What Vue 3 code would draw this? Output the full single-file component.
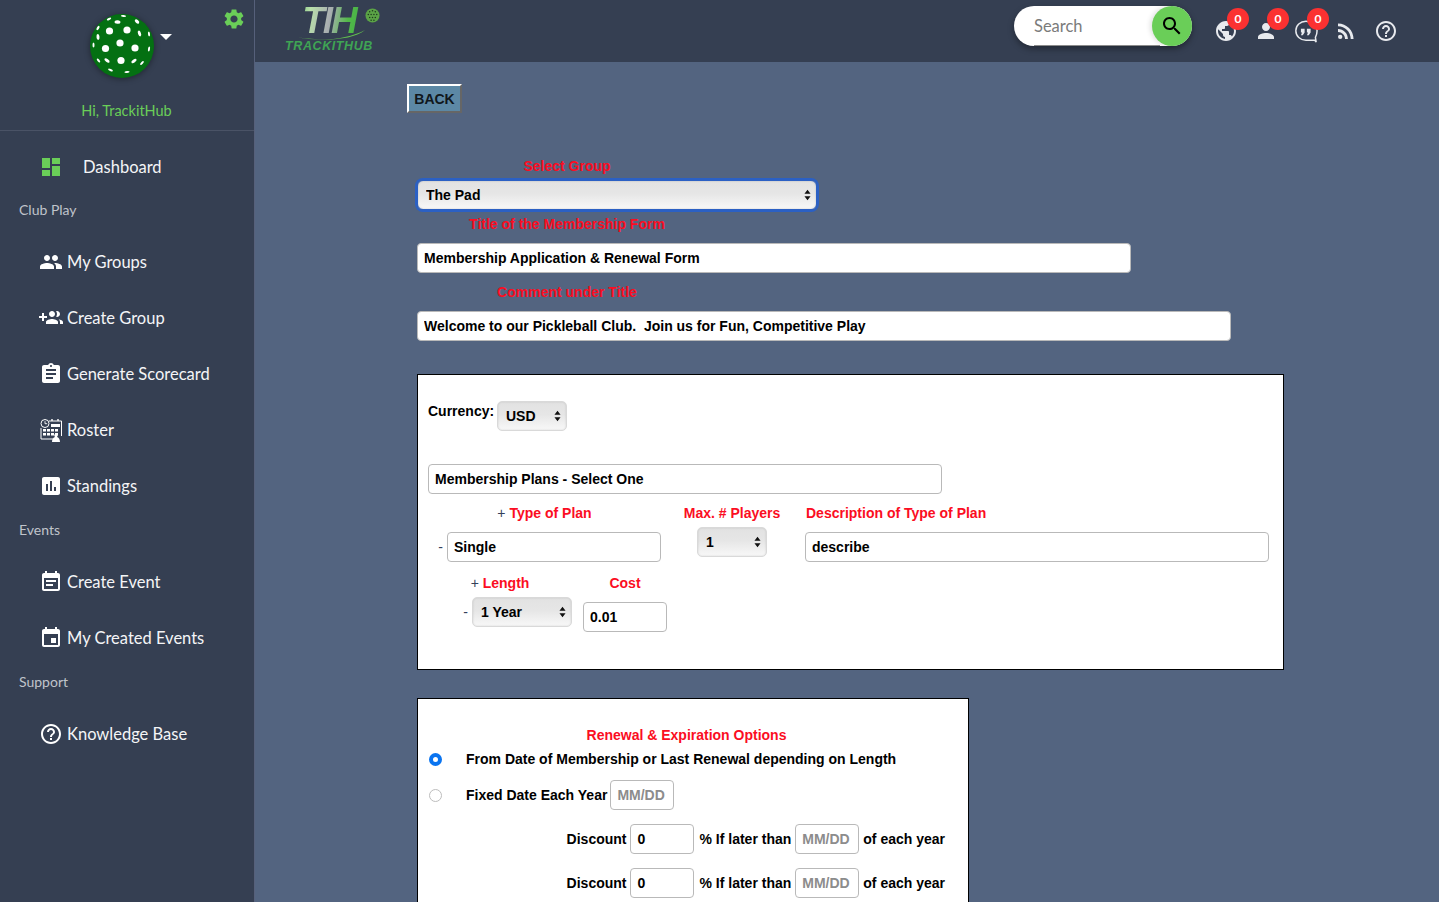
<template>
  <div class="page">
    <aside class="sidebar">
      <div class="profile">
        <svg class="ball" viewBox="0 0 64 64">
          <circle cx="32" cy="32" r="32" fill="#047012" />
          <circle v-for="(d, i) in ballDots" :key="'d' + i" :cx="d[0]" :cy="d[1]" r="3.6" fill="#fff" />
          <ellipse
            v-for="(d, i) in ballSlits"
            :key="'s' + i"
            :cx="d[0]"
            :cy="d[1]"
            :rx="d[2]"
            :ry="d[3]"
            :transform="`rotate(${d[4]} ${d[0]} ${d[1]})`"
            fill="#fff"
          />
        </svg>
        <span class="caret"></span>
        <svg class="gear" viewBox="0 0 24 24"><path :d="icons.gear" /></svg>
        <div class="hello">Hi, TrackitHub</div>
      </div>

      <nav class="nav">
        <a class="nav-item dash">
          <svg class="dash-icon" viewBox="3 3 18 18"><path :d="icons.dashboard" /></svg>
          <span>Dashboard</span>
        </a>
        <template v-for="group in navGroups" :key="group.title">
          <div class="nav-title">{{ group.title }}</div>
          <a v-for="item in group.items" :key="item.label" class="nav-item">
            <svg v-if="item.roster" class="nav-icon roster" viewBox="0 0 24 24">
              <circle cx="6" cy="5.5" r="4" fill="#353f52" stroke="#fff" stroke-width="1" />
              <path d="M6 3.2v2.5h2.2" fill="none" stroke="#fff" stroke-width=".9" />
              <path d="M10 3h12.5v15M2 10v11h12" fill="none" stroke="#fff" stroke-width="1" />
              <path d="M4 11h3v2.500H4zM8 11h3v2.500H8zM12 11h3v2.500h-3zM16 11h3v2.500h-3zM4 15h3v2.500H4zM8 15h3v2.500H8zM12 15h3v2.500h-3zM16 15h3v2.500h-3zM12 6h9v3h-9z" fill="#fff" />
              <path d="M13 24c0-3 1.500-4.500 3-5-1-.8-1-3.500 1-3.500s2 2.700 1 3.500c1.500.5 3 2 3 5z" fill="#fff" />
              <path d="M19 3V1M13 3V1" stroke="#fff" stroke-width="1.400" />
            </svg>
            <svg v-else class="nav-icon" viewBox="0 0 24 24"><path :d="icons[item.icon]" /></svg>
            <span>{{ item.label }}</span>
          </a>
        </template>
      </nav>
    </aside>

    <div class="main">
      <header class="topbar">
        <div class="logo">
          <div class="logo-mark">TIH</div>
          <svg class="logo-swoosh" viewBox="0 0 80 12"><path d="M1 8c26 5 56 2 74-8C60 12 28 12 1 8z" fill="#63c24e" /></svg>
          <svg class="logo-ball" viewBox="0 0 16 16">
            <circle cx="8" cy="8" r="7.500" fill="#5ba346" />
            <circle v-for="(d, i) in logoDots" :key="i" :cx="d[0]" :cy="d[1]" r=".8" fill="#1c3a1e" />
          </svg>
          <div class="logo-name">TRACKITHUB</div>
        </div>

        <div class="search">
          <input class="search-input" placeholder="Search" />
          <button class="search-btn">
            <svg viewBox="0 0 24 24"><path :d="icons.search" /></svg>
          </button>
        </div>

        <div class="top-icons">
          <div v-for="t in topIcons" :key="t.name" class="top-icon">
            <svg v-if="t.name === 'chat'" class="chat" viewBox="0 0 26 26">
              <path d="M13 2.500C6.700 2.500 2 7 2 12.800S6.700 23 13 23h9.500l1.500 2-.8-5c1.100-2 1.800-4.500 1.800-7.200C25 7 19.300 2.500 13 2.500z" fill="none" stroke="#e8eaee" stroke-width="1.600" />
              <path d="M7.500 10.500h4v4l-2 3H7.500l1.200-3H7.500zM14 10.500h4v4l-2 3h-2l1.200-3H14z" fill="#e8eaee" />
            </svg>
            <svg v-else viewBox="0 0 24 24"><path :d="icons[t.name]" /><circle v-if="t.name === 'rss'" cx="6.180" cy="17.820" r="2.180" /></svg>
            <span v-if="t.badge" class="badge">0</span>
          </div>
        </div>
      </header>

      <main class="content">
        <button class="back">BACK</button>

        <div class="top-label first">Select Group</div>
        <div class="sel sel-group focused">
          <select><option>The Pad</option></select>
          <svg class="updown" viewBox="0 0 8 12"><path d="M4 0l3.500 4.500h-7zM4 12L.5 7.500h7z" /></svg>
        </div>

        <div class="top-label">Title of the Membership Form</div>
        <input class="field title-field" value="Membership Application &amp; Renewal Form" />

        <div class="top-label">Comment under Title</div>
        <input class="field comment-field" value="Welcome to our Pickleball Club.  Join us for Fun, Competitive Play" />

        <section class="box plans">
          <div class="currency-row">
            <label class="currency-label">Currency:</label>
            <div class="sel sel-usd">
              <select><option>USD</option></select>
              <svg class="updown" viewBox="0 0 8 12"><path d="M4 0l3.500 4.500h-7zM4 12L.5 7.500h7z" /></svg>
            </div>
          </div>

          <input class="field plans-title" value="Membership Plans - Select One" />

          <div class="plan-row">
            <div class="col-type">
              <div class="red-label"><span class="sign">+ </span>Type of Plan</div>
              <div class="with-sign">
                <span class="sign">-</span>
                <input class="field type-field" value="Single" />
              </div>
            </div>
            <div class="col-max">
              <div class="red-label">Max. # Players</div>
              <div class="sel sel-max">
                <select><option>1</option></select>
                <svg class="updown" viewBox="0 0 8 12"><path d="M4 0l3.500 4.500h-7zM4 12L.5 7.500h7z" /></svg>
              </div>
            </div>
            <div class="col-desc">
              <div class="red-label">Description of Type of Plan</div>
              <input class="field desc-field" value="describe" />
            </div>
          </div>

          <div class="length-row">
            <div class="col-length">
              <div class="red-label"><span class="sign">+ </span>Length</div>
              <div class="with-sign length-sel">
                <span class="sign">-</span>
                <div class="sel sel-length">
                  <select><option>1 Year</option></select>
                  <svg class="updown" viewBox="0 0 8 12"><path d="M4 0l3.500 4.500h-7zM4 12L.5 7.500h7z" /></svg>
                </div>
              </div>
            </div>
            <div class="col-cost">
              <div class="red-label">Cost</div>
              <input class="field cost-field" value="0.01" />
            </div>
          </div>
        </section>

        <section class="box renewal">
          <div class="red-label">Renewal &amp; Expiration Options</div>
          <div class="radio-row first-radio">
            <input type="radio" name="renew" class="radio" checked />
            <span>From Date of Membership or Last Renewal depending on Length</span>
          </div>
          <div class="radio-row fixed-row">
            <input type="radio" name="renew" class="radio" />
            <span>Fixed Date Each Year</span>
            <input class="field date-field" placeholder="MM/DD" />
          </div>
          <div v-for="n in 2" :key="n" class="discount-row">
            <span>Discount</span>
            <input class="field date-field" value="0" />
            <span class="pct">% If later than</span>
            <input class="field date-field" placeholder="MM/DD" />
            <span>of each year</span>
          </div>
        </section>
      </main>
    </div>
  </div>
</template>

<script setup>
const icons = {
  gear: 'M19.14 12.94c.04-.3.06-.61.06-.94 0-.32-.02-.64-.07-.94l2.03-1.58c.18-.14.23-.41.12-.61l-1.92-3.32c-.12-.22-.37-.29-.59-.22l-2.39.96c-.5-.38-1.03-.7-1.62-.94l-.36-2.54c-.04-.24-.24-.41-.48-.41h-3.84c-.24 0-.43.17-.47.41l-.36 2.54c-.59.24-1.13.57-1.62.94l-2.39-.96c-.22-.08-.47 0-.59.22L2.74 8.87c-.12.21-.08.47.12.61l2.03 1.58c-.05.3-.09.63-.09.94s.02.64.07.94l-2.03 1.58c-.18.14-.23.41-.12.61l1.92 3.32c.12.22.37.29.59.22l2.39-.96c.5.38 1.03.7 1.62.94l.36 2.54c.05.24.24.41.48.41h3.84c.24 0 .44-.17.47-.41l.36-2.54c.59-.24 1.13-.56 1.62-.94l2.39.96c.22.08.47 0 .59-.22l1.92-3.32c.12-.22.07-.47-.12-.61l-2.01-1.58zM12 15.6c-1.98 0-3.6-1.62-3.6-3.6s1.62-3.6 3.6-3.6 3.6 1.62 3.6 3.6-1.62 3.6-3.6 3.6z',
  dashboard: 'M3 13h8V3H3v10zm0 8h8v-6H3v6zm10 0h8V11h-8v10zm0-18v6h8V3h-8z',
  people: 'M16 11c1.66 0 2.99-1.34 2.99-3S17.66 5 16 5c-1.66 0-3 1.34-3 3s1.34 3 3 3zm-8 0c1.66 0 2.99-1.34 2.99-3S9.66 5 8 5C6.34 5 5 6.34 5 8s1.34 3 3 3zm0 2c-2.33 0-7 1.17-7 3.5V19h14v-2.5c0-2.33-4.67-3.5-7-3.5zm8 0c-.29 0-.62.02-.97.05 1.16.84 1.97 1.97 1.97 3.45V19h6v-2.5c0-2.33-4.67-3.5-7-3.5z',
  groupAdd: 'M8 10H5V7H3v3H0v2h3v3h2v-3h3v-2zm10 1c1.66 0 2.99-1.34 2.99-3S19.66 5 18 5c-.32 0-.63.05-.91.14.57.81.9 1.79.9 2.86s-.34 2.04-.9 2.86c.28.09.59.14.91.14zm-5 0c1.66 0 2.99-1.34 2.99-3S14.66 5 13 5s-3 1.34-3 3 1.34 3 3 3zm6.62 2.16c.83.73 1.38 1.66 1.38 2.84v2h3v-2c0-1.54-2.37-2.49-4.38-2.84zM13 13c-2 0-6 1-6 3v2h12v-2c0-2-4-3-6-3z',
  assignment: 'M19 3h-4.18C14.4 1.84 13.3 1 12 1c-1.3 0-2.4.84-2.82 2H5c-1.1 0-2 .9-2 2v14c0 1.1.9 2 2 2h14c1.1 0 2-.9 2-2V5c0-1.1-.9-2-2-2zm-7 0c.55 0 1 .45 1 1s-.45 1-1 1-1-.45-1-1 .45-1 1-1zm2 14H7v-2h7v2zm3-4H7v-2h10v2zm0-4H7V7h10v2z',
  assessment: 'M19 3H5c-1.1 0-2 .9-2 2v14c0 1.1.9 2 2 2h14c1.1 0 2-.9 2-2V5c0-1.1-.9-2-2-2zM9 17H7v-7h2v7zm4 0h-2V7h2v10zm4 0h-2v-4h2v4z',
  eventNote: 'M17 10H7v2h10v-2zm2-7h-1V1h-2v2H8V1H6v2H5c-1.11 0-1.99.9-1.99 2L3 19c0 1.1.89 2 2 2h14c1.1 0 2-.9 2-2V5c0-1.1-.9-2-2-2zm0 16H5V8h14v11zm-5-5H7v2h7v-2z',
  event: 'M17 12h-5v5h5v-5zM16 1v2H8V1H6v2H5c-1.11 0-1.99.9-1.99 2L3 19c0 1.1.89 2 2 2h14c1.1 0 2-.9 2-2V5c0-1.1-.9-2-2-2h-1V1h-2zm3 18H5V8h14v11z',
  help: 'M11 18h2v-2h-2v2zm1-16C6.48 2 2 6.48 2 12s4.48 10 10 10 10-4.48 10-10S17.52 2 12 2zm0 18c-4.41 0-8-3.59-8-8s3.59-8 8-8 8 3.59 8 8-3.59 8-8 8zm0-14c-2.21 0-4 1.79-4 4h2c0-1.1.9-2 2-2s2 .9 2 2c0 2-3 1.75-3 5h2c0-2.25 3-2.5 3-5 0-2.21-1.79-4-4-4z',
  search: 'M15.5 14h-.79l-.28-.27C15.41 12.59 16 11.11 16 9.5 16 5.91 13.09 3 9.5 3S3 5.91 3 9.5 5.91 16 9.5 16c1.61 0 3.09-.59 4.23-1.57l.27.28v.79l5 4.99L20.49 19l-4.99-5zm-6 0C7.01 14 5 11.99 5 9.5S7.01 5 9.5 5 14 7.01 14 9.5 11.99 14 9.5 14z',
  globe: 'M12 2C6.48 2 2 6.48 2 12s4.48 10 10 10 10-4.48 10-10S17.52 2 12 2zm-1 17.93c-3.95-.49-7-3.85-7-7.93 0-.62.08-1.21.21-1.79L9 15v1c0 1.1.9 2 2 2v1.93zm6.9-2.54c-.26-.81-1-1.39-1.9-1.39h-1v-3c0-.55-.45-1-1-1H8v-2h2c.55 0 1-.45 1-1V7h2c1.1 0 2-.9 2-2v-.41c2.93 1.19 5 4.06 5 7.41 0 2.08-.8 3.97-2.1 5.39z',
  person: 'M12 12c2.21 0 4-1.79 4-4s-1.79-4-4-4-4 1.79-4 4 1.79 4 4 4zm0 2c-2.67 0-8 1.34-8 4v2h16v-2c0-2.66-5.33-4-8-4z',
  rss: 'M4 4.44v2.83c7.03 0 12.73 5.7 12.73 12.73h2.83c0-8.59-6.97-15.56-15.56-15.56zm0 5.66v2.83c3.9 0 7.07 3.17 7.07 7.07h2.83c0-5.47-4.43-9.9-9.9-9.9z'
}

const navGroups = [
  {
    title: 'Club Play',
    items: [
      { label: 'My Groups', icon: 'people' },
      { label: 'Create Group', icon: 'groupAdd' },
      { label: 'Generate Scorecard', icon: 'assignment' },
      { label: 'Roster', roster: true },
      { label: 'Standings', icon: 'assessment' }
    ]
  },
  {
    title: 'Events',
    items: [
      { label: 'Create Event', icon: 'eventNote' },
      { label: 'My Created Events', icon: 'event' }
    ]
  },
  {
    title: 'Support',
    items: [{ label: 'Knowledge Base', icon: 'help' }]
  }
]

const topIcons = [
  { name: 'globe', badge: true },
  { name: 'person', badge: true },
  { name: 'chat', badge: true },
  { name: 'rss' },
  { name: 'help' }
]

// ball holes, coordinates read off the picture (svg box is 64x64)
const ballDots = [
  [19.5, 17], [37, 16], [30, 29], [15.5, 34.500], [45, 34], [31, 46.500]
]
const ballSlits = [
  [27.500, 8, 3, 1.800, 5], [47, 7.500, 2.600, 1.600, 40], [33.500, 2, 2.600, 1, 5],
  [19, 5, 2.400, 1, -25], [8, 14, 2.400, 1.200, -60], [49.500, 19.500, 3, 1.500, 70],
  [8, 23, 3, 1.500, 85], [59, 20, 2.400, 1, 80], [3.500, 31, 2.600, 1, 90],
  [59, 35, 2.600, 1, -80], [8.500, 46.500, 2.400, 1, 50], [17, 46.500, 3, 1.500, 35],
  [44, 47, 3, 1.500, -35], [52, 49, 2.400, 1, -45], [20.500, 56, 2.600, 1, 25], [37, 58, 2.600, 1, -5]
]
const logoDots = [
  [5, 4], [8, 3], [11, 4], [3.500, 7], [6.500, 7], [9.500, 7], [12.500, 7],
  [5, 10], [8, 10], [11, 10], [6.500, 13], [9.500, 13]
]
</script>

<style>
html, body {
  margin: 0;
  padding: 0;
  height: 100%;
  overflow: hidden;
}
</style>

<style scoped>
.page {
  display: flex;
  height: 100vh;
  overflow: hidden;
  background: #536480;
  font-family: "Liberation Sans", Arial, sans-serif;
}

/* sidebar */
.sidebar {
  flex: 0 0 254px;
  background: #353f52;
  border-right: 1px solid #56607a;
  color: #fff;
  font-family: Lato, "Open Sans", sans-serif;
}
.profile {
  position: relative;
  height: 130px;
  border-bottom: 1px solid #4a5366;
  text-align: center;
}
.ball {
  position: absolute;
  left: 90px;
  top: 14px;
  width: 64px;
  height: 64px;
  filter: drop-shadow(0 1px 3px rgba(0, 0, 0, 0.4));
}
.caret {
  position: absolute;
  left: 160px;
  top: 34px;
  border-left: 6px solid transparent;
  border-right: 6px solid transparent;
  border-top: 6px solid #fff;
}
.gear {
  position: absolute;
  left: 222px;
  top: 7px;
  width: 24px;
  height: 24px;
  fill: #6ace58;
}
.hello {
  position: absolute;
  left: 0;
  right: 1px;
  top: 102px;
  font-size: 14.500px;
  line-height: 18px;
  color: #6ace58;
}
.nav {
  padding-top: 8px;
}
.nav-item {
  display: flex;
  align-items: center;
  height: 56px;
  padding-left: 39px;
  font-size: 16.500px;
  color: #f4f5f7;
}
.nav-item.dash {
  height: 55px;
  padding-left: 42px;
}
.dash-icon {
  width: 18px;
  height: 18px;
  margin-right: 23px;
  fill: #6ace58;
}
.nav-icon {
  width: 24px;
  height: 24px;
  margin-right: 4px;
  fill: #fff;
}
.nav-title {
  height: 32px;
  line-height: 32px;
  margin-bottom: 8px;
  padding-left: 19px;
  font-size: 14px;
  color: #c0c4cb;
}

/* header */
.main {
  flex: 1;
  min-width: 0;
  display: flex;
  flex-direction: column;
}
.topbar {
  flex: 0 0 62px;
  display: flex;
  align-items: flex-start;
  padding: 6px 33px 0 21px;
  box-sizing: border-box;
  background: #353f52;
}
.logo {
  position: relative;
  width: 106px;
  height: 50px;
  text-align: center;
  font-family: "Liberation Sans", Arial, sans-serif;
  font-style: italic;
  font-weight: 700;
}
.logo-mark {
  width: 88px;
  margin-left: 9px;
  font-size: 37px;
  line-height: 30px;
  letter-spacing: -2px;
  background: linear-gradient(100deg, #3aa648 0%, #b8e0aa 28%, #a9aeb2 50%, #52b948 70%, #3aa648 100%);
  -webkit-background-clip: text;
  background-clip: text;
  color: transparent;
}
.logo-swoosh {
  position: absolute;
  left: 18px;
  top: 24px;
  width: 78px;
  height: 11px;
}
.logo-ball {
  position: absolute;
  left: 89px;
  top: 2px;
  width: 15px;
  height: 15px;
}
.logo-name {
  margin-top: 4px;
  font-size: 12.500px;
  line-height: 13px;
  font-weight: 700;
  letter-spacing: 0.6px;
  white-space: nowrap;
  color: #3fa454;
}
.search {
  display: flex;
  align-items: center;
  width: 178px;
  height: 40px;
  margin-left: auto;
  border-radius: 20px;
  background: #fff;
  box-shadow: 0 3px 6px rgba(0, 0, 0, 0.35);
}
.search-input {
  width: 126px;
  height: 38px;
  margin-left: 20px;
  padding: 0;
  border: 0;
  border-bottom: 1px solid #8b8b8b;
  outline: 0;
  background: transparent;
  font-family: Lato, "Open Sans", sans-serif;
  font-size: 16.500px;
}
.search-input::placeholder {
  color: #7b7b7b;
  opacity: 1;
}
.search-btn {
  width: 40px;
  height: 40px;
  margin-left: -8px;
  padding: 8px;
  border: 0;
  border-radius: 50%;
  background: #6ace58;
  box-shadow: -2px 0 5px rgba(0, 0, 0, 0.12);
}
.search-btn svg {
  display: block;
  width: 24px;
  height: 24px;
}
.top-icons {
  display: flex;
  margin-left: 14px;
}
.top-icon {
  position: relative;
  display: flex;
  align-items: center;
  justify-content: center;
  width: 40px;
  height: 50px;
}
.top-icon svg {
  width: 24px;
  height: 24px;
  fill: #e8eaee;
}
.badge {
  position: absolute;
  left: 21px;
  top: 2px;
  width: 22px;
  height: 22px;
  border-radius: 50%;
  background: #fb3131;
  color: #fff;
  font-family: Lato, sans-serif;
  font-size: 12px;
  font-weight: 700;
  line-height: 22px;
  text-align: center;
}

/* form */
.content {
  flex: 1;
  min-height: 0;
  overflow: hidden;
  padding: 22px 0 0 152px;
  font-size: 14px;
  font-weight: 700;
  line-height: 16px;
  color: #000;
}
.back {
  display: block;
  width: 55px;
  height: 29px;
  padding: 0;
  border: 2px solid;
  border-color: #fff #666 #666 #fff;
  background: #5c88a5;
  color: #10171c;
  font: 700 14px "Liberation Sans", Arial, sans-serif;
}
.top-label {
  width: 300px;
  margin: 11px 0 11px 10px;
  text-align: center;
  color: #fb0d22;
}
.top-label.first {
  margin-top: 45px;
  margin-bottom: 6px;
}
.sel-group + .top-label {
  margin-top: 6px;
}
.field {
  display: block;
  box-sizing: border-box;
  height: 30px;
  padding: 0 6px;
  border: 1px solid #b9b9b9;
  border-radius: 4px;
  outline: 0;
  background: #fff;
  color: #000;
  font: 700 14px "Liberation Sans", Arial, sans-serif;
  white-space: pre;
}
.field::placeholder {
  color: #8c8c8c;
  opacity: 1;
}
.title-field {
  width: 714px;
  margin-left: 10px;
}
.comment-field {
  width: 814px;
  margin-left: 10px;
}
.sel {
  position: relative;
  box-sizing: border-box;
  height: 30px;
}
.sel select {
  display: block;
  width: 100%;
  height: 100%;
  padding: 0 0 0 8px;
  border: 1px solid #d9d9d9;
  border-radius: 5px;
  outline: 0;
  appearance: none;
  background: linear-gradient(#e2e2e2, #e6e6e6 45%, #f8f8f8);
  box-shadow: inset 0 0 2px rgba(0, 0, 0, 0.15);
  color: #000;
  font: 700 14px "Liberation Sans", Arial, sans-serif;
}
.updown {
  position: absolute;
  right: 6px;
  top: 9px;
  width: 7px;
  height: 12px;
  fill: #111;
  pointer-events: none;
}
.sel-group {
  width: 400px;
  margin-left: 10px;
}
.focused select {
  border: 1px solid #2b60c4;
  border-radius: 6px;
  box-shadow: 0 0 0 2px #2b60c4, inset 0 0 2px rgba(0, 0, 0, 0.2);
}
.box {
  box-sizing: border-box;
  margin-left: 10px;
  border: 1px solid #000;
  background: #fff;
}
.plans {
  width: 867px;
  height: 296px;
  margin-top: 33px;
  padding: 26px 14px 0 10px;
}
.currency-row {
  display: flex;
  align-items: flex-start;
}
.currency-label {
  width: 69px;
  padding-top: 2px;
}
.sel-usd {
  width: 70px;
}
.plans-title {
  width: 514px;
  margin-top: 33px;
}
.plan-row {
  display: flex;
  margin-top: 11px;
}
.red-label {
  color: #fb0d22;
  text-align: center;
  white-space: nowrap;
}
.sign {
  color: #33405a;
  font-weight: 400;
}
.col-type {
  width: 233px;
}
.with-sign {
  display: flex;
  align-items: center;
  justify-content: flex-end;
  gap: 4px;
  margin-top: 11px;
}
.type-field {
  width: 214px;
}
.col-max {
  width: 102px;
  margin-left: 20px;
}
.sel-max {
  width: 70px;
  margin: 6px 0 0 16px;
}
.col-desc {
  margin-left: 22px;
}
.col-desc .red-label {
  margin-left: 1px;
  text-align: left;
}
.desc-field {
  width: 464px;
  margin-top: 11px;
}
.length-row {
  display: flex;
  margin-top: 13px;
}
.col-length {
  width: 144px;
}
.length-sel {
  margin: 6px -9px 0 0;
  padding-right: 9px;
}
.sel-length {
  width: 100px;
  flex: none;
}
.col-cost {
  width: 84px;
  margin-left: 11px;
}
.cost-field {
  width: 84px;
  margin-top: 11px;
}
.renewal {
  width: 552px;
  margin-top: 28px;
  padding: 28px 23px 40px 10px;
}
.radio-row {
  display: flex;
  align-items: center;
}
.first-radio {
  margin-top: 8px;
}
.fixed-row {
  margin-top: 13px;
}
.radio {
  box-sizing: border-box;
  flex: none;
  width: 13px;
  height: 13px;
  margin: 0 24px 0 1px;
  border: 1px solid #bdbdbd;
  border-radius: 50%;
  appearance: none;
  background: #fff;
}
.radio:checked {
  border: 4px solid #0a74f0;
}
.fixed-row .date-field {
  margin-left: 3px;
}
.date-field {
  width: 64px;
}
.discount-row {
  display: flex;
  align-items: center;
  justify-content: flex-end;
  gap: 4px;
  margin-top: 14px;
}
.pct {
  margin-left: 1px;
}
</style>
